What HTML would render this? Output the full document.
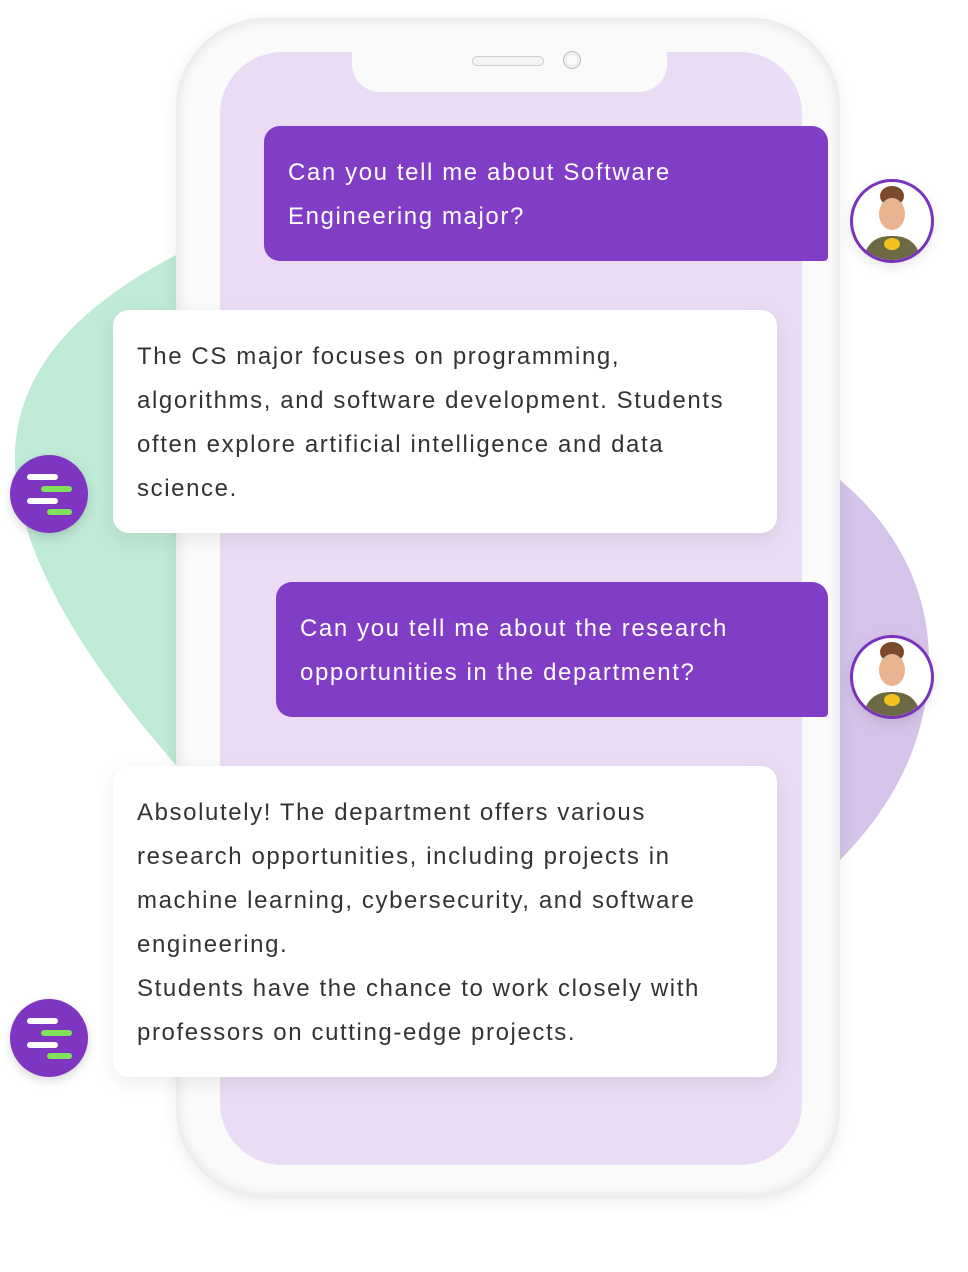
<!DOCTYPE html>
<html><head><style>
body{margin:0;width:968px;height:1272px;background:#fff;position:relative;overflow:hidden;font-family:"Liberation Sans",sans-serif}
.abs{position:absolute}
.phone{left:176px;top:18px;width:664px;height:1180px;border-radius:90px;background:#fafafa;box-shadow:inset 0 0 14px rgba(0,0,0,.12),0 4px 16px rgba(0,0,0,.08)}
.screen{left:220px;top:52px;width:582px;height:1113px;border-radius:62px;background:#e9dcf4}
.notch{left:352px;top:40px;width:315px;height:52px;background:#fafafa;border-radius:0 0 28px 28px}
.b{position:absolute;box-sizing:border-box;font-size:24px;line-height:44px;letter-spacing:1.6px;white-space:nowrap}
.u{background:#813dc6;color:#fff;border-radius:16px 16px 4px 16px;padding:25px 24px}
.w{background:#fff;color:#333;border-radius:16px;padding:25px 24px;box-shadow:0 6px 20px rgba(0,0,0,.08)}
.av{width:78px;height:78px;border-radius:50%;border:3px solid #7a33bd;background:#fff;overflow:hidden;box-shadow:0 4px 12px rgba(0,0,0,.1)}
.bot{width:78px;height:78px;border-radius:50%;background:#7d35c2;box-shadow:0 4px 10px rgba(0,0,0,.15)}
.bar{position:absolute;height:6px;border-radius:3px}
</style></head><body>
<svg class="abs" style="left:0;top:0" width="968" height="1272">
<path d="M176 255 C90 300 20 360 15 450 C10 560 110 690 176 765 Z" fill="#bfead6"/>
<path d="M840 480 C900 530 935 600 928 680 C922 760 880 820 840 860 Z" fill="#d6c3e9"/>
</svg>
<div class="abs phone"></div>
<div class="abs screen"></div>
<div class="abs notch"></div>
<div class="abs" style="left:472px;top:56px;width:70px;height:8px;border:1px solid #ccc;border-radius:5px;background:#f4f4f4"></div>
<div class="abs" style="left:563px;top:51px;width:16px;height:16px;border:1px solid #bbb;border-radius:50%;box-shadow:inset 0 0 0 3px #eee"></div>

<div class="b u" style="left:264px;top:126px;width:564px;height:135px">Can you tell me about Software<br>Engineering major?</div>
<div class="b w" style="left:113px;top:310px;width:664px;height:223px">The CS major focuses on programming,<br>algorithms, and software development. Students<br>often explore artificial intelligence and data<br>science.</div>
<div class="b u" style="left:276px;top:582px;width:552px;height:135px">Can you tell me about the research<br>opportunities in the department?</div>
<div class="b w" style="left:113px;top:766px;width:664px;height:311px">Absolutely! The department offers various<br>research opportunities, including projects in<br>machine learning, cybersecurity, and software<br>engineering.<br>Students have the chance to work closely with<br>professors on cutting-edge projects.</div>

<div class="abs av" style="left:850px;top:179px"><svg width="78" height="78"><ellipse cx="39" cy="14" rx="12" ry="10" fill="#7a4a2a"/><ellipse cx="39" cy="32" rx="13" ry="16" fill="#e8b48f"/><path d="M10 78 C14 58 26 54 39 54 C52 54 64 58 68 78Z" fill="#6b6a45"/><ellipse cx="39" cy="62" rx="8" ry="6" fill="#f3c21e"/></svg></div>
<div class="abs av" style="left:850px;top:635px"><svg width="78" height="78"><ellipse cx="39" cy="14" rx="12" ry="10" fill="#7a4a2a"/><ellipse cx="39" cy="32" rx="13" ry="16" fill="#e8b48f"/><path d="M10 78 C14 58 26 54 39 54 C52 54 64 58 68 78Z" fill="#6b6a45"/><ellipse cx="39" cy="62" rx="8" ry="6" fill="#f3c21e"/></svg></div>

<div class="abs bot" style="left:10px;top:455px"><div class="bar" style="left:17px;top:19px;width:31px;background:#fff"></div><div class="bar" style="left:31px;top:31px;width:31px;background:#7ee35a"></div><div class="bar" style="left:17px;top:43px;width:31px;background:#fff"></div><div class="bar" style="left:37px;top:54px;width:25px;background:#7ee35a"></div></div>
<div class="abs bot" style="left:10px;top:999px"><div class="bar" style="left:17px;top:19px;width:31px;background:#fff"></div><div class="bar" style="left:31px;top:31px;width:31px;background:#7ee35a"></div><div class="bar" style="left:17px;top:43px;width:31px;background:#fff"></div><div class="bar" style="left:37px;top:54px;width:25px;background:#7ee35a"></div></div>
</body></html>
